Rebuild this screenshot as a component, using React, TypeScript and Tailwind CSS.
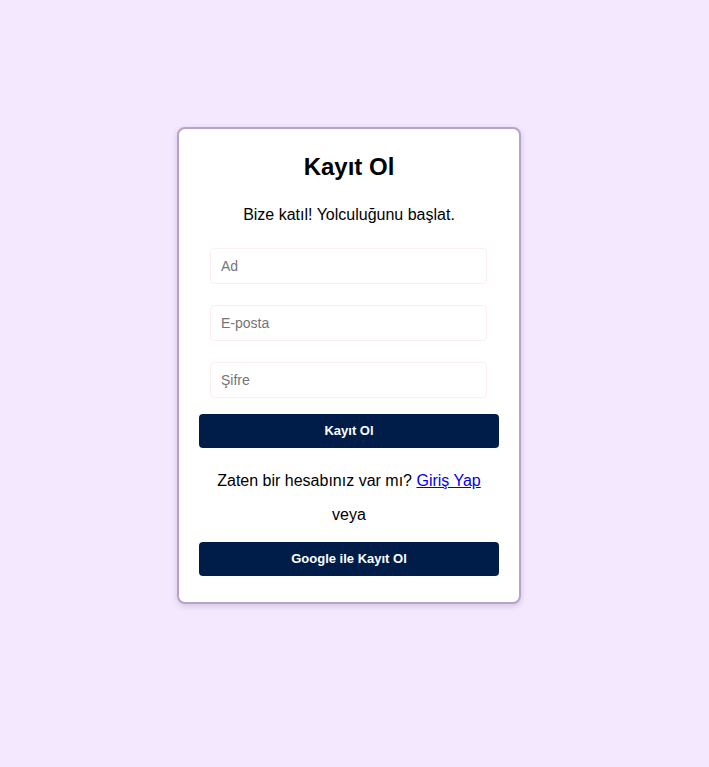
export default function App() {
  return (
    <div
      className="min-h-screen w-full bg-[#f3e8ff] flex justify-center pt-[127px] pr-[11px]"
      style={{ fontFamily: '"Liberation Sans", Arial, sans-serif' }}
    >
      <div className="w-[344px] h-[477px] bg-white border-2 border-[#b9a3cc] rounded-[8px] shadow-[0_2px_6px_rgba(0,0,0,0.15)] px-[20px] pt-[24px] flex flex-col items-center">
        <h2 className="text-[24px] leading-[28px] font-bold text-black">Kayıt Ol</h2>
        <p className="mt-[24px] text-[16px] leading-[20px] text-black">Bize katıl! Yolculuğunu başlat.</p>
        <div className="mt-[23px] w-[277px] flex flex-col gap-[21px] ml-[-1px]">
          {["Ad", "E-posta", "Şifre"].map((p) => (
            <input
              key={p}
              placeholder={p}
              type={p === "Şifre" ? "password" : "text"}
              className="h-[36px] w-full border border-[#fbeff3] rounded-[4px] px-[10px] text-[14px] outline-none placeholder:text-[#757575]"
            />
          ))}
        </div>
        <button className="mt-[16px] w-full h-[34px] bg-[#001d4a] text-white text-[13px] font-bold rounded-[4px]">
          Kayıt Ol
        </button>
        <p className="mt-[23px] text-[16px] leading-[20px] text-black">
          Zaten bir hesabınız var mı?{" "}
          <a href="#" className="text-[#0000ee] underline">
            Giriş Yap
          </a>
        </p>
        <p className="mt-[14px] text-[16px] leading-[20px] text-black">veya</p>
        <button className="mt-[17px] w-full h-[34px] bg-[#001d4a] text-white text-[13px] font-bold rounded-[4px]">
          Google ile Kayıt Ol
        </button>
      </div>
    </div>
  );
}
